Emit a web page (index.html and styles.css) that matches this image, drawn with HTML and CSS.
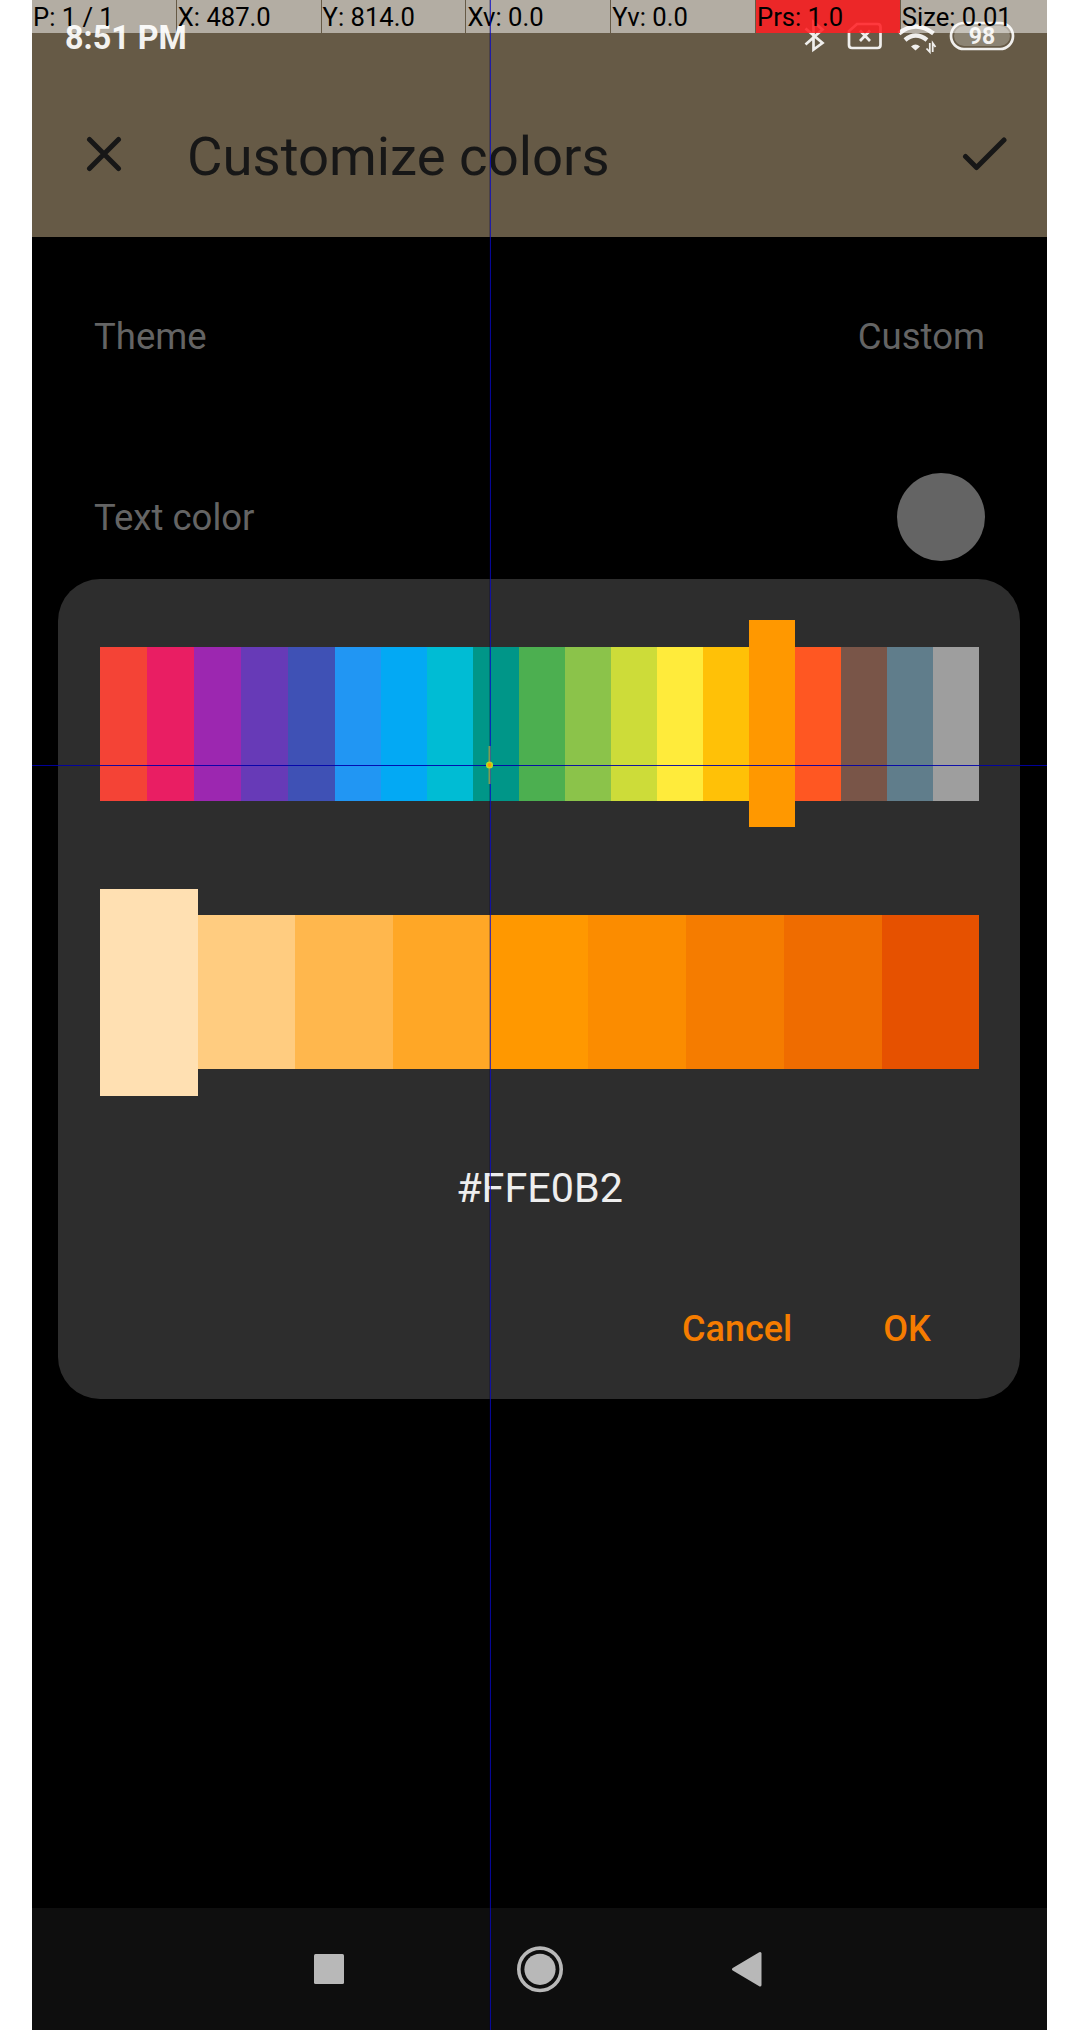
FILE: index.html
```html
<!DOCTYPE html>
<html lang="en">
<head>
<meta charset="utf-8">
<title>Customize colors</title>
<link rel="stylesheet" href="styles.css">
</head>
<body>
<main class="screen">
  <header class="header">
    <div class="status">
      <span class="clock">8:51 PM</span>
      <svg class="status-icons" viewBox="800 18 222 38" width="222" height="38" fill="none" stroke="#f0efed" stroke-width="2.7">
        <path d="M805.500 28.500 822.500 43 813.500 49.500V22L822.500 29.500 805.500 44.500"/>
        <path d="M857 24H877.500Q880.500 24 880.500 27V45Q880.500 48 877.500 48H852Q849 48 849 45V31Z"/>
        <path d="M860 30.500 870 41M870 30.500 860 41"/>
        <path stroke-width="4.400" d="M899 33.500Q915.500 19.500 933.500 33.500M905 40Q915.500 31 927 40"/>
        <path fill="#f0efed" stroke="none" d="M911 46.500Q915.500 42.500 920 46.500L915.500 50.500Z"/>
        <path stroke-width="1.800" d="M929.800 43V52L926.500 48.500M932.700 52V43L935.500 47"/>
        <rect x="951" y="23" width="62" height="26" rx="13"/>
        <rect x="954" y="26" width="56" height="20" rx="10" fill="#f0efed" fill-opacity=".28" stroke="none"/>
        <text class="battery" x="982" y="44" text-anchor="middle">98</text>
      </svg>
    </div>
    <div class="toolbar">
      <svg width="36" height="36" viewBox="0 0 36 36" class="stroke-icon"><path d="M3.500 3.500 32.500 32.500M32.500 3.500 3.500 32.500"/></svg>
      <h1 class="title">Customize colors</h1>
      <svg width="46" height="36" viewBox="0 0 46 36" class="stroke-icon"><path d="M3.500 20.500 14.500 31.500 42 4"/></svg>
    </div>
  </header>
  <section class="settings">
    <div class="setting"><span>Theme</span><span>Custom</span></div>
    <div class="setting setting-color"><span>Text color</span><i class="dot"></i></div>
  </section>
  <section class="dialog">
    <div class="palette hues">
      <i class="wide red"></i><i class="wide pink"></i><i class="wide purple"></i><i class="wide violet"></i><i class="wide indigo"></i><i class="blue"></i><i class="sky"></i><i class="cyan"></i><i class="teal"></i><i class="green"></i><i class="light-green"></i><i class="lime"></i><i class="yellow"></i><i class="amber"></i><i class="orange selected"></i><i class="deep-orange"></i><i class="brown"></i><i class="slate"></i><i class="grey"></i>
    </div>
    <div class="palette shades">
      <i class="s100 selected"></i><i class="s200"></i><i class="s300"></i><i class="s400"></i><i class="orange"></i><i class="s600"></i><i class="s700"></i><i class="s800"></i><i class="s900"></i>
    </div>
    <div class="hex">#FFE0B2</div>
    <div class="actions"><span>Cancel</span><span>OK</span></div>
  </section>
  <nav class="nav">
    <svg width="1015" height="122" viewBox="32 1908 1015 122" fill="#b8b8b8">
      <rect x="314" y="1954" width="30" height="30" rx="1.500"/>
      <circle cx="540" cy="1969.300" r="21.200" fill="none" stroke="#b8b8b8" stroke-width="3.600"/>
      <circle cx="540" cy="1969.300" r="15.600"/>
      <path d="M733.500 1969.300 760 1953.500V1985Z" stroke="#b8b8b8" stroke-width="3" stroke-linejoin="round"/>
    </svg>
  </nav>
  <div class="pointer-bar"><span>P: 1 / 1</span><span>X: 487.0</span><span>Y: 814.0</span><span>Xv: 0.0</span><span>Yv: 0.0</span><span class="pressure">Prs: 1.0</span><span>Size: 0.01</span></div>
  <i class="line-v"></i>
  <i class="line-h"></i>
  <svg class="touch" width="9" height="40" viewBox="0 0 9 40"><path d="M4.500 1V39" stroke="#7f9a55" stroke-width="2"/><circle cx="4.500" cy="20" r="2.800" fill="#ff9800" stroke="#b4dc28" stroke-width="1.500"/></svg>
</main>
</body>
</html>
```
FILE: styles.css
```css
* { box-sizing: border-box; }
body { margin: 0; background: #fff; font-family: Roboto, sans-serif; }
.screen { position: relative; display: flex; flex-direction: column; width: 1015px; height: 2030px; margin-left: 32px; background: #000; overflow: hidden; }
.header { height: 237px; background: #665a46; color: #171717; }
.status { display: flex; justify-content: space-between; height: 74px; padding: 18px 25px 0 33px; }
.clock { padding-top: 1px; color: #f3f2f0; font-size: 32.3px; font-weight: 700; line-height: 38px; }
.battery { font: 700 23px Roboto, sans-serif; fill: #f3f2f0; stroke: none; }
.toolbar { display: flex; align-items: center; height: 160px; padding: 0 39px 0 54px; }
.title { flex: 1; margin: 4px 0 0 65px; font-size: 54.5px; font-weight: 400; line-height: 64px; }
.stroke-icon { fill: none; stroke: #171717; stroke-width: 5; stroke-linecap: round; stroke-linejoin: round; }
.settings { height: 342px; padding: 78px 62px 0 62px; color: #646464; font-size: 36.5px; line-height: 44px; }
.setting { display: flex; justify-content: space-between; align-items: center; height: 44px; }
.setting-color { height: 89px; margin-top: 113.5px; }
.setting-color span { padding-top: 2px; }
.dot { width: 88.5px; height: 88.5px; border-radius: 50%; background: #646464; }
.dialog { width: 962px; height: 820px; margin-left: 26.4px; padding: 67.7px 41.1px 0 41.4px; border-radius: 42px; background: #2d2d2d; }
.palette { display: flex; height: 154px; }
.palette i { flex: 49 1 0; }
.palette .wide { flex-grow: 50; }
.palette .selected { margin: -26.4px 0; }
.shades { margin-top: 114.7px; }
.red { background: #f44336; }
.pink { background: #e91e63; }
.purple { background: #9c27b0; }
.violet { background: #673ab7; }
.indigo { background: #3f51b5; }
.blue { background: #2196f3; }
.sky { background: #03a9f4; }
.cyan { background: #00bcd4; }
.teal { background: #009688; }
.green { background: #4caf50; }
.light-green { background: #8bc34a; }
.lime { background: #cddc39; }
.yellow { background: #ffeb3b; }
.amber { background: #ffc107; }
.orange { background: #ff9800; }
.deep-orange { background: #ff5722; }
.brown { background: #795548; }
.slate { background: #607d8b; }
.grey { background: #9e9e9e; }
.s100 { background: #ffe0b2; }
.s200 { background: #ffcc80; }
.s300 { background: #ffb74d; }
.s400 { background: #ffa726; }
.s600 { background: #fb8c00; }
.s700 { background: #f57c00; }
.s800 { background: #ef6c00; }
.s900 { background: #e65100; }
.hex { margin-top: 94.4px; color: #eee; font-size: 41.3px; line-height: 48px; text-align: center; }
.actions { display: flex; justify-content: flex-end; gap: 91px; margin-top: 96px; padding-right: 48.5px; color: #f57c00; font-size: 36px; font-weight: 500; line-height: 42px; }
.nav { height: 122px; margin-top: auto; background: #0e0e0e; }
.nav svg { display: block; }
.pointer-bar { position: absolute; top: 0; left: 0; display: grid; grid-template-columns: repeat(6, 143.8px) 1fr; column-gap: 1px; width: 1015px; height: 33px; font-size: 25.6px; line-height: 34px; color: #000; white-space: nowrap; }
.pointer-bar span { height: 33px; padding-left: 1px; background: rgba(255, 255, 255, .5); }
.pointer-bar .pressure { background: rgba(255, 32, 36, .88); }
.line-v { position: absolute; top: 0; left: 457px; width: 2px; height: 100%; border-left: 1px solid rgba(0, 0, 60, .25); background: rgba(8, 8, 200, .75); background-clip: padding-box; }
.line-h { position: absolute; top: 765px; left: 0; width: 100%; height: 1px; background: rgba(0, 0, 170, .9); }
.touch { position: absolute; top: 745px; left: 453px; }
```
